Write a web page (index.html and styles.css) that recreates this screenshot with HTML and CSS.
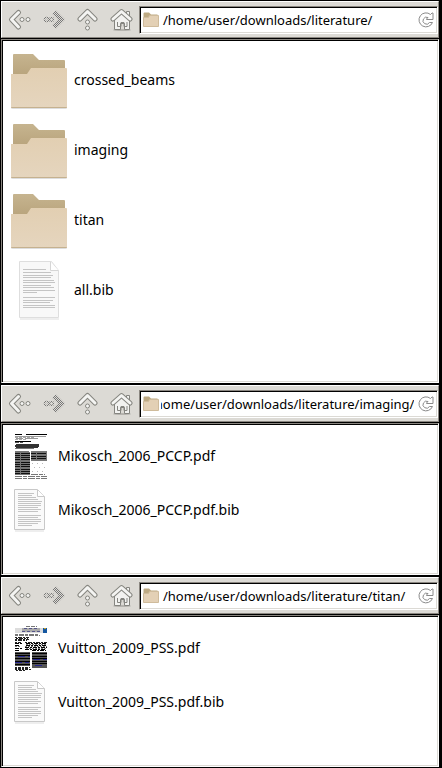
FILE: index.html
```html
<!DOCTYPE html>
<html lang="en">
<head>
<meta charset="utf-8">
<title>File browser</title>
<link rel="stylesheet" href="styles.css">
</head>
<body>
<svg class="defs" width="0" height="0" aria-hidden="true">
  <defs>
    <linearGradient id="front" x1="0" y1="0" x2="0" y2="1"><stop offset="0" stop-color="#e2cfb2"/><stop offset="1" stop-color="#e5d5be"/></linearGradient>
    <linearGradient id="back-flap" x1="0" y1="0" x2="0" y2="1"><stop offset="0" stop-color="#c6b48f"/><stop offset="1" stop-color="#b5a078"/></linearGradient>
    <pattern id="dither" width="2" height="2" patternUnits="userSpaceOnUse"><path fill="#777" d="M0 0h1v1H0zM1 1h1v1H1z"/></pattern>
    <symbol id="i-back" viewBox="0 0 24 24">
      <path class="edge" d="M10.500 4.500l-7 7 7 7.500"/><path class="face" d="M10.500 4.500l-7 7 7 7.500"/>
      <circle class="dot" cx="14" cy="11.500" r="2"/><circle class="dot" cx="20" cy="11.500" r="2"/>
    </symbol>
    <symbol id="i-forward" viewBox="0 0 24 24">
      <path fill="none" stroke="url(#dither)" stroke-width="5" d="M12 4l7.500 7.500L12 19"/>
      <circle cx="4.500" cy="11.500" r="2" fill="none" stroke="url(#dither)" stroke-width="1.500"/><circle cx="9.500" cy="11.500" r="2" fill="none" stroke="url(#dither)" stroke-width="1.500"/>
    </symbol>
    <symbol id="i-up" viewBox="0 0 24 24">
      <path class="edge" d="M4 11l7.500-7.500L19 11"/><path class="face" d="M4 11l7.500-7.500L19 11"/>
      <circle class="dot" cx="11.500" cy="14" r="2"/><circle class="dot" cx="11.500" cy="20" r="2"/>
    </symbol>
    <symbol id="i-home" viewBox="0 0 24 24">
      <ellipse cx="12" cy="22" rx="9" ry="1" fill="#b5b3ae"/>
      <path d="M16.500 3.500h3v6h-3zM4.500 11L12 5l7.500 6v10.500h-5v-6h-4v6h-6z" fill="#f2f2f0" stroke="#858580"/>
      <path d="M7.500 14v4.500h3.500v-4h3v4h3V14" fill="none" stroke="#858580"/>
      <path class="edge" d="M3 11l8.500-7.500L20 11"/><path class="face" d="M3 11l8.500-7.500L20 11"/>
    </symbol>
    <symbol id="i-reload" viewBox="0 0 16 16">
      <path d="M14.500 10.500h-3A3.500 3.500 0 1 1 10 5.500L8.500 7v.500h6.500V1h-1l-1.500 1.500A7 7 0 1 0 14.500 10.500z" fill="#fff" stroke="#8a8a8a"/>
    </symbol>
    <symbol id="i-folder" viewBox="0 0 64 64">
      <path d="M4 58h56v2q0 1-2 1H6q-2 0-2-1z" fill="#ddd"/>
      <path d="M6 7q0-1 1-1h19l6 6h25q1 0 1 1v20H6z" fill="url(#back-flap)"/>
      <path d="M4 26h16l4-6h35q1 0 1 1v38q0 1-1 1H5q-1 0-1-1z" fill="url(#front)"/>
      <path d="M4 59h56q0 1-1 1H5q-1 0-1-1z" fill="#c5b18f"/>
    </symbol>
    <symbol id="i-minifolder" viewBox="0 0 16 16">
      <path d="M.5 1.500Q.5.500 1.500.500H6l2 2h6.500v5H.5z" fill="#bda982"/>
      <path d="M.5 5.500h5l1-2h9v11H.5z" fill="#e3d0b5" stroke="#cfbb9b"/>
    </symbol>
    <symbol id="i-page" viewBox="0 0 64 64">
      <path d="M13 61h39" stroke="#ddd"/>
      <path d="M12.500 3.500h32l7 9v47h-39z" fill="#f8f8f8" stroke="#dedede"/>
      <path d="M43.500 4v8.500h8" fill="#fff" stroke="#d6d6d6"/>
      <path class="print" d="M16 11.500h23M16 14.500h28M16 17.500h30M16 19.500h28M16 22.500h31M16 24.500h32M16 27.500h28M16 29.500h31M16 32.500h32M16 34.500h14M16 39.500h32M16 42.500h30M16 44.500h27M16 47.500h32M16 49.500h32"/>
    </symbol>
    <symbol id="i-page-small" viewBox="0 0 48 48">
      <path d="M9 45h29" stroke="#ddd"/>
      <path d="M8.500 3.500h23l7 7v33h-30z" fill="#fafafa" stroke="#c8c8c8"/>
      <path d="M31.500 4v6.500h7" fill="#fff" stroke="#c8c8c8"/>
      <path class="print" d="M12 7.500h16M12 9.500h14M12 11.500h18M12 13.500h20M12 15.500h24M12 17.500h23M12 19.500h23M12 21.500h20M12 23.500h23M12 25.500h20M12 29.500h23M12 31.500h20M12 33.500h23M12 35.500h23M12 37.500h20M12 39.500h14"/>
    </symbol>
  </defs>
</svg>

<main class="screen">
  <section class="window">
    <nav class="toolbar">
      <button type="button" aria-label="Back"><svg><use href="#i-back"/></svg></button>
      <button type="button" aria-label="Forward"><svg><use href="#i-forward"/></svg></button>
      <button type="button" aria-label="Up"><svg><use href="#i-up"/></svg></button>
      <button type="button" aria-label="Home"><svg><use href="#i-home"/></svg></button>
      <div class="address">
        <svg class="mini"><use href="#i-minifolder"/></svg>
        <input type="text" aria-label="Location" value="/home/user/downloads/literature/">
        <button class="reload" type="button" aria-label="Reload"><svg><use href="#i-reload"/></svg></button>
      </div>
    </nav>
    <ul class="files large">
      <li><svg><use href="#i-folder"/></svg><span>crossed_beams</span></li>
      <li><svg><use href="#i-folder"/></svg><span>imaging</span></li>
      <li><svg><use href="#i-folder"/></svg><span>titan</span></li>
      <li><svg><use href="#i-page"/></svg><span>all.bib</span></li>
    </ul>
  </section>

  <section class="window">
    <nav class="toolbar">
      <button type="button" aria-label="Back"><svg><use href="#i-back"/></svg></button>
      <button type="button" aria-label="Forward"><svg><use href="#i-forward"/></svg></button>
      <button type="button" aria-label="Up"><svg><use href="#i-up"/></svg></button>
      <button type="button" aria-label="Home"><svg><use href="#i-home"/></svg></button>
      <div class="address">
        <svg class="mini"><use href="#i-minifolder"/></svg>
        <input type="text" aria-label="Location" value="/home/user/downloads/literature/imaging/">
        <button class="reload" type="button" aria-label="Reload"><svg><use href="#i-reload"/></svg></button>
      </div>
    </nav>
    <ul class="files">
      <li>
        <svg viewBox="0 0 48 48" fill="none" stroke="#333">
          <path stroke="#000" d="M9 2.500h7m4 0h21"/>
          <path stroke="#999" d="M9 4.500h31M10 6.500h7m2 0h13"/>
          <path stroke="#aaa" stroke-dasharray="3 1" d="M9 5.500h20M9 7.500h11"/>
          <path stroke="#000" d="M9 9.500h16"/>
          <path stroke="#555" stroke-dasharray="4 1" d="M9 10.500h8"/>
          <path d="M10 12.500h23M9 13.500h24M9 14.500h24M10 15.500h22"/>
          <path stroke="#777" d="M9 16.500h19M9 19.500h14M25 19.500h16"/>
          <path fill="#777" stroke="none" d="M9 20h15v23H9zM25 20h16v9H25z"/>
          <path stroke="#111" stroke-dasharray="5 1 9 1" d="M9 21.500h15M9 23.500h15M9 25.500h15M9 27.500h15M9 30.500h15M9 32.500h15M9 34.500h15M9 37.500h15M9 39.500h15M9 41.500h15M25 21.500h16M25 24.500h16M25 26.500h16"/>
          <path stroke="#bbb" stroke-dasharray="1 4" d="M26 31.500h14M28 35.500h12M26 39.500h14"/>
          <path stroke="#777" stroke-dasharray="7 1 4 1" d="M9 44.500h32M9 46.500h32M25 42.500h14"/>
        </svg>
        <span>Mikosch_2006_PCCP.pdf</span>
      </li>
      <li><svg><use href="#i-page-small"/></svg><span>Mikosch_2006_PCCP.pdf.bib</span></li>
    </ul>
  </section>

  <section class="window">
    <nav class="toolbar">
      <button type="button" aria-label="Back"><svg><use href="#i-back"/></svg></button>
      <button type="button" aria-label="Forward"><svg><use href="#i-forward"/></svg></button>
      <button type="button" aria-label="Up"><svg><use href="#i-up"/></svg></button>
      <button type="button" aria-label="Home"><svg><use href="#i-home"/></svg></button>
      <div class="address">
        <svg class="mini"><use href="#i-minifolder"/></svg>
        <input type="text" aria-label="Location" value="/home/user/downloads/literature/titan/">
        <button class="reload" type="button" aria-label="Reload"><svg><use href="#i-reload"/></svg></button>
      </div>
    </nav>
    <ul class="files">
      <li>
        <svg viewBox="0 0 48 48" fill="none" stroke="#222">
          <path stroke="#777" stroke-dasharray="4 1" d="M20 2.500h11"/>
          <path fill="#ddd" stroke="none" d="M9 4h32v5H9z"/>
          <path fill="#aaa" stroke="none" d="M16 4h18v4H16z"/>
          <path stroke="#558" stroke-dasharray="3 2" d="M18 4.500h15M16 7.500h18"/>
          <path fill="#1557a0" stroke="none" d="M37 4h4v5h-4z"/><path stroke="#c9a227" d="M38 4.500h2"/>
          <path stroke="#777" stroke-dasharray="3 1 5 1" d="M9 10.500h23M9 11.500h25"/>
          <path stroke-dasharray="2 1 4 1" d="M9 13.500h14M10 14.500h12M9 15.500h14M9 16.500h12M9 18.500h6m4 0h22"/>
          <path stroke="#000" stroke-dasharray="4 1 2 1" d="M9 19.500h7M20 19.500h21M9 21.500h5M20 21.500h21M9 24.500h7M19 23.500h22M19 25.500h21M9 26.500h5M26 26.500h14"/>
          <path stroke="#777" stroke-dasharray="2 1" d="M20 20.500h21M19 22.500h22M20 24.500h21M9 22.500h5"/>
          <path fill="#555" stroke="none" d="M9 28h15v14H9zM26 28h15v16H26z"/>
          <path stroke="#000" d="M9 29.500h15M9 31.500h15M9 34.500h15M9 37.500h15M9 40.500h15M26 29.500h15M26 32.500h15M26 34.500h15M26 37.500h15M26 39.500h15"/>
          <path stroke="#25258c" stroke-dasharray="7 3" d="M12 32.500h12M9 38.500h14M27 35.500h14M29 41.500h10"/>
          <path stroke-dasharray="2 1 3 1" d="M9 43.500h15M9 44.500h14M9 45.500h16M10 46.500h9"/>
        </svg>
        <span>Vuitton_2009_PSS.pdf</span>
      </li>
      <li><svg><use href="#i-page-small"/></svg><span>Vuitton_2009_PSS.pdf.bib</span></li>
    </ul>
  </section>
</main>
<script src="script.js"></script>
</body>
</html>
```
FILE: styles.css
```css
* { box-sizing: border-box; }

body {
  margin: 0;
  background: #000;
  color: #000;
  font: 14px/20px "Noto Sans", sans-serif;
}

.defs { position: absolute; }

.screen {
  display: grid;
  grid-template-rows: 2fr 1fr 1fr;
  min-height: 100vh;
}

.window {
  display: flex;
  flex-direction: column;
  gap: 1px;
  min-width: 0;
  padding: 1px 3px 1px 1px;
}

.toolbar {
  display: flex;
  align-items: center;
  height: 37px;
  padding-left: 1px;
  background: #dcdad5;
  border: 1px solid;
  border-color: #fff #8a8680 #8a8680 #fff;
}

button {
  display: flex;
  align-items: center;
  justify-content: center;
  flex: none;
  width: 34px;
  padding: 0;
  border: 0;
  background: none;
}

button svg { width: 24px; height: 24px; }

.edge, .face {
  fill: none;
  stroke: #85857f;
  stroke-width: 5px;
  stroke-linecap: round;
  stroke-linejoin: round;
}

.face { stroke: #f4f4f2; stroke-width: 3px; }
.dot { fill: #f4f4f2; stroke: #85857f; }

.address {
  display: flex;
  align-items: center;
  flex: 1;
  min-width: 0;
  height: 28px;
  padding: 0 3px 0 2px;
  background: #fff;
  border: 1px solid;
  border-color: #8a8680 #fff #fff #8a8680;
  box-shadow: inset 1px 1px #000, inset -1px -1px #dcdad5;
}

.mini {
  flex: none;
  width: 16px;
  height: 16px;
  margin: 0 2px 0 1px;
}

.address input {
  flex: 1;
  min-width: 0;
  height: 22px;
  padding: 0;
  border: 0;
  outline: 0;
  background: none;
  color: inherit;
  font: inherit;
  font-size: 13px;
  text-indent: 2px;
}

.reload { width: 20px; justify-content: flex-end; }
.reload svg { width: 16px; height: 16px; }

.files {
  flex: 1;
  margin: 0;
  padding: 5px 4px;
  list-style: none;
  background: #fff;
  border: 1px solid;
  border-color: #8a8680 #fff #fff #8a8680;
  box-shadow: inset 1px 1px #000, inset -1px -1px #dcdad5;
}

.files li {
  display: flex;
  align-items: center;
  gap: 4px;
  height: 54px;
}

.files svg {
  flex: none;
  width: 48px;
  height: 48px;
}

.files.large { padding: 5px; }

.files.large li { gap: 3px; height: 70px; }

.files.large svg { width: 64px; height: 64px; }

.print { stroke: #c4c4c4; }
```
FILE: script.js
```js
// Keep the end of a long path in view.
document.querySelectorAll('.address input').forEach(function (field) {
  field.scrollLeft = field.scrollWidth;
});
```
